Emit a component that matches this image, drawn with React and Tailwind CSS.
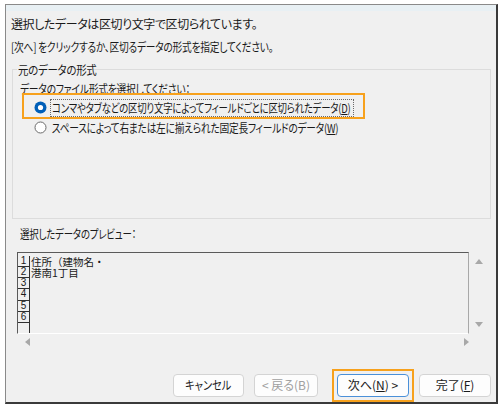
import React from 'react';

const font = "font-['Noto_Sans_CJK_JP',sans-serif] [font-feature-settings:'palt']";

function Radio({ checked }) {
  return (
    <svg width="13" height="13" viewBox="0 0 13 13" className="shrink-0">
      {checked ? (
        <>
          <circle cx="6.5" cy="6.5" r="6" fill="#005fb8" />
          <circle cx="6.5" cy="6.5" r="2.6" fill="#ffffff" />
        </>
      ) : (
        <circle cx="6.5" cy="6.5" r="5.5" fill="#ffffff" stroke="#6b6b6b" strokeWidth="1" />
      )}
    </svg>
  );
}

function Arrow({ dir }) {
  const pts = {
    up: '1,6 5,1 9,6',
    down: '1,1 5,6 9,1',
    left: '6,1 1,5 6,9',
    right: '1,1 6,5 1,9',
  }[dir];
  const w = dir === 'up' || dir === 'down' ? 10 : 7;
  const h = dir === 'up' || dir === 'down' ? 7 : 10;
  return (
    <svg width={w} height={h} viewBox={`0 0 ${w} ${h}`}>
      <polygon points={pts} fill="#a8a8a8" />
    </svg>
  );
}

function Button({ children, disabled, primary, className = '' }) {
  return (
    <div
      className={`h-[23px] flex items-center justify-center rounded-[4px] bg-[#fdfdfd] text-[12px] border ${
        primary ? 'border-[#4a90d9]' : 'border-[#d4d4d4]'
      } ${disabled ? 'text-[#a0a0a0]' : 'text-[#1a1a1a]'} ${className}`}
    >
      {children}
    </div>
  );
}

export default function App() {
  const rows = ['住所（建物名・', '港南1丁目', '', '', '', ''];

  return (
    <div className={`w-[503px] h-[410px] bg-white pt-[4px] pl-[5px] ${font}`}>
      <div className="w-[493px] h-[400px] bg-[#f0f0f0] border-l border-t border-[#8a8a8a] border-r-2 border-b-2 border-r-[#3a3a3a] border-b-[#3a3a3a] flex flex-col text-[#1a1a1a]">
        {/* title strip */}
        <div className="h-[6px] bg-[#e8f0f4]" />

        <div className="pl-[5px] text-[12px] leading-[16px] whitespace-nowrap">
          <p className="mt-[5px] tracking-[-0.4px]">選択したデータは区切り文字で区切られています。</p>
          <p className="mt-[7px] tracking-[-0.3px] origin-left scale-x-[0.81]">[次へ] をクリックするか、区切るデータの形式を指定してください。</p>
        </div>

        {/* source data format group */}
        <fieldset className="relative ml-[6px] mt-[7px] w-[479px] h-[162px] border border-[#dcdcdc] text-[12px] leading-[16px] whitespace-nowrap">
          <legend className="ml-[4px] px-[1px]">
            <span className="block tracking-[-0.3px] origin-left scale-x-[0.87] w-[74px]">元のデータの形式</span>
          </legend>
          <p className="ml-[7px] mt-[3px] tracking-[-0.3px] origin-left scale-x-[0.815]">データのファイル形式を選択してください：</p>
          <div className="ml-[21px] mt-[2px] h-[18px] flex items-center">
            <Radio checked />
            <div className="ml-[3px] w-[304px] h-[18px] px-[1px] flex items-center border border-dotted border-[#6a6a6a]">
              <span className="tracking-[-0.3px] origin-left scale-x-[0.785]">
                コンマやタブなどの区切り文字によってフィールドごとに区切られたデータ(<span className="underline">D</span>)
              </span>
            </div>
          </div>
          <div className="ml-[21px] mt-[2px] h-[18px] flex items-center">
            <Radio />
            <span className="ml-[4px] px-[1px] tracking-[-0.3px] origin-left scale-x-[0.81]">
              スペースによって右または左に揃えられた固定長フィールドのデータ(<span className="underline">W</span>)
            </span>
          </div>
          {/* highlight frame */}
          <div className="absolute left-[9px] top-[15px] w-[343px] h-[26px] border-2 border-[#f7a11c]" />
        </fieldset>

        <p className="ml-[14px] mt-[7px] text-[12px] leading-[16px] whitespace-nowrap tracking-[-0.3px] origin-left scale-x-[0.79]">選択したデータのプレビュー：</p>

        {/* preview */}
        <div className="ml-[11px] mt-[10px] flex">
          <div className="w-[452px] h-[82px] border-t border-l border-[#5a5a5a] border-r border-r-[#a8a8a8] border-b border-b-white overflow-hidden">
            <div className="mt-[3px] flex flex-col">
              {rows.concat(['']).map((r, i) => (
                <div key={i} className="flex h-[11.3px]">
                  <div className="w-[12px] border-r border-b border-[#303030] font-['Liberation_Sans',sans-serif] text-[10px] leading-[10px] text-center">
                    {i < 6 ? i + 1 : ''}
                  </div>
                  <div className="h-[11.3px] text-[10.5px] leading-[11px] pl-[1px] whitespace-nowrap [font-feature-settings:normal]">{r}</div>
                </div>
              ))}
            </div>
          </div>
          <div className="w-[18px] h-[82px] flex flex-col items-center justify-between pt-[6px] pb-[6px] pl-[1px]">
            <Arrow dir="up" />
            <Arrow dir="down" />
          </div>
        </div>
        <div className="ml-[18px] w-[446px] h-[18px] flex items-center justify-between">
          <Arrow dir="left" />
          <Arrow dir="right" />
        </div>

        {/* buttons */}
        <div className="mt-[18px] flex items-center">
          <Button className="ml-[167px] w-[71px]">
            <span className="origin-center scale-x-[0.85]">キャンセル</span>
          </Button>
          <Button disabled className="ml-[10px] w-[64px]">&lt; 戻る(B)</Button>
          <div className="ml-[14px] p-[3px] border-2 border-[#f7a11c]">
            <Button primary className="w-[72px]">
              次へ(<span className="underline">N</span>)&nbsp;&gt;
            </Button>
          </div>
          <Button className="ml-[5px] w-[72px]">
            完了(<span className="underline">F</span>)
          </Button>
        </div>
      </div>
    </div>
  );
}
